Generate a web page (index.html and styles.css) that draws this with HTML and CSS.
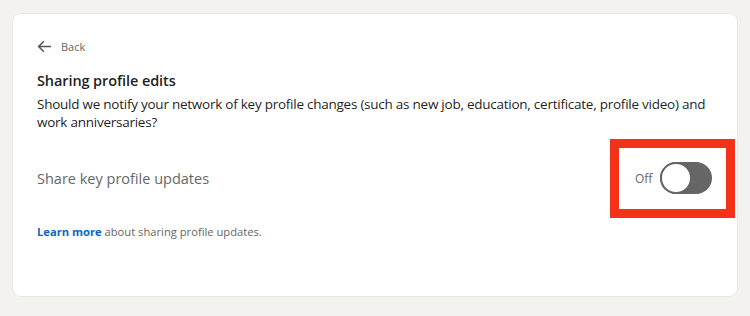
FILE: index.html
```html
<!DOCTYPE html>
<html lang="en">
<head>
<meta charset="utf-8">
<title>Sharing profile edits</title>
<link rel="stylesheet" href="styles.css">
</head>
<body>
<main class="card">
  <a class="back" href="#">
    <svg class="back-icon" viewBox="0 0 16 16" width="15" height="15" aria-hidden="true">
      <path d="M15 7.2H3.6l4.2-4.2-1.1-1.1L.6 8l6.1 6.1 1.1-1.1-4.2-4.2H15z" fill="currentColor"/>
    </svg>
    <span>Back</span>
  </a>
  <h1 class="title">Sharing profile edits</h1>
  <p class="desc">Should we notify your network of key profile changes (such as new job, education, certificate, profile video) and work anniversaries?</p>
  <div class="setting">
    <span class="setting-label">Share key profile updates</span>
    <div class="toggle-group">
      <span class="toggle-state">Off</span>
      <span class="switch"><span class="knob"></span></span>
    </div>
  </div>
  <p class="learn"><a class="learn-link" href="#">Learn more</a> about sharing profile updates.</p>
</main>
</body>
</html>
```

FILE: styles.css
```css
*, *::before, *::after { box-sizing: border-box; }
html, body { margin: 0; }
body {
  background: #f3f2ef;
  padding: 14px 13px;
  font-family: "Open Sans", "Noto Sans", "Liberation Sans", sans-serif;
  color: rgba(0,0,0,0.9);
}
.card {
  background: #fff;
  border-radius: 8px;
  width: 724px;
  height: 282px;
  padding: 22px 25px 0 24px;
  box-shadow: 0 0 0 1px rgba(0,0,0,0.04);
}
.back {
  display: flex;
  align-items: center;
  gap: 9px;
  height: 20px;
  color: #666;
  text-decoration: none;
  font-size: 11px;
  width: max-content;
}
.back-icon { color: #555; flex-shrink: 0; }
.title {
  margin: 13px 0 0;
  font-size: 14.5px;
  letter-spacing: -0.1px;
  line-height: 24px;
  font-weight: 600;
  color: rgba(0,0,0,0.9);
}
.desc {
  margin: 2px 0 0;
  font-size: 13.5px;
  letter-spacing: -0.25px;
  line-height: 18px;
  color: rgba(0,0,0,0.9);
}
.setting {
  margin-top: 31px;
  display: flex;
  align-items: center;
  justify-content: space-between;
  height: 32px;
}
.setting-label {
  font-size: 14.5px;
  color: #666;
}
.toggle-group {
  position: relative;
  display: flex;
  align-items: center;
  flex-shrink: 0;
  gap: 8px;
  width: 77px;
  height: 32px;
}
.toggle-group::after {
  content: "";
  position: absolute;
  top: -23px;
  left: -25px;
  width: 125px;
  height: 79px;
  border: 9px solid #f4321a;
  pointer-events: none;
}
.toggle-state {
  font-size: 12px;
  color: #666;
  flex-shrink: 0;
}
.switch {
  flex: 0 0 52px;
  display: flex;
  align-items: center;
  width: 52px;
  height: 32px;
  border-radius: 16px;
  background: #666;
}
.knob {
  width: 32px;
  height: 32px;
  border-radius: 50%;
  background: #fff;
  border: 2px solid #666;
}
.learn {
  margin: 30px 0 0;
  font-size: 11.2px;
  line-height: 16px;
  color: #666;
}
.learn-link {
  color: #0a66c2;
  font-weight: 700;
  text-decoration: none;
}
```
